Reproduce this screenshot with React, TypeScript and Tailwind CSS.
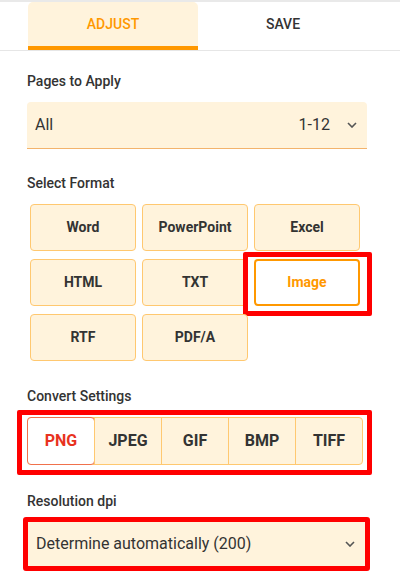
import { useState } from 'react'

const formats = ['Word', 'PowerPoint', 'Excel', 'HTML', 'TXT', 'Image', 'RTF', 'PDF/A']
const imageTypes = ['PNG', 'JPEG', 'GIF', 'BMP', 'TIFF']

function Chevron() {
  return (
    <svg width="10" height="6" viewBox="0 0 10 6" className="shrink-0">
      <path d="M1 1l4 4 4-4" fill="none" stroke="#555" strokeWidth="1.6" />
    </svg>
  )
}

export default function App() {
  const [tab, setTab] = useState('adjust')
  const [format, setFormat] = useState('Image')
  const [imgType, setImgType] = useState('PNG')

  return (
    <div className="w-[400px] h-[587px] bg-white text-[#333] overflow-hidden font-['Roboto',sans-serif]">
      <div className="h-[2px] bg-[#e9e9e9]" />
      <div className="flex pl-[28px] border-b border-[#e6e6e6]">
        {['adjust', 'save'].map((t) => (
          <button
            key={t}
            onClick={() => setTab(t)}
            className={`w-[170px] h-[48px] pt-[1px] rounded-t-[5px] text-[14px] font-medium uppercase border-b-4 ${
              tab === t ? 'bg-[#fff3dc] text-[#ff9800] border-[#ff9800]' : 'text-[#333] border-transparent'
            }`}
          >
            {t}
          </button>
        ))}
      </div>

      <div className="pl-[27px] w-[367px]">
        <div className="mt-[20px] h-[20px] leading-[20px] text-[14px] font-medium">Pages to Apply</div>
        <div className="mt-[11px] h-[47px] bg-[#fff3dc] rounded-t-[4px] border-b border-[#f3b36c] flex items-center pl-[8px] pr-[10px]">
          <span className="text-[16px] flex-1">All</span>
          <span className="text-[16px] mr-[17px]">1-12</span>
          <Chevron />
        </div>

        <div className="mt-[24px] h-[20px] leading-[20px] text-[14px] font-medium">Select Format</div>
        <div className="mt-[11px] ml-[3px] grid grid-cols-[106px_106px_106px] gap-x-[6px] gap-y-[8px]">
          {formats.map((f) => (
            <div key={f} className="relative">
              <button
                onClick={() => setFormat(f)}
                className={`w-full h-[47px] rounded-[4px] text-[14px] font-bold ${
                  format === f
                    ? 'bg-white border-2 border-[#ff9800] text-[#ff9800]'
                    : 'bg-[#fff3dc] border border-[#ffc870] text-[#333]'
                }`}
              >
                {f}
              </button>
              {f === 'Image' && (
                <span className="absolute -left-[11px] -right-[12px] -top-[7px] -bottom-[10px] border-[5px] border-[#ff0000] rounded-[2px] pointer-events-none" />
              )}
            </div>
          ))}
        </div>

        <div className="mt-[25px] h-[20px] leading-[20px] text-[14px] font-medium">Convert Settings</div>
        <div className="relative mt-[11px] w-[336px]">
          <div className="flex h-[48px] border border-[#ffc870] rounded-[4px] bg-[#fff3dc]">
            {imageTypes.map((t, i) => (
              <button
                key={t}
                onClick={() => setImgType(t)}
                className={`flex-1 text-[16px] font-bold ${
                  imgType === t
                    ? 'bg-white border border-[#f0714c] rounded-[4px] text-[#e8321e] -m-px'
                    : `text-[#333] ${i > 0 ? 'border-l border-[#ffc870]' : ''}`
                }`}
              >
                {t}
              </button>
            ))}
          </div>
          <span className="absolute -left-[10px] -right-[9px] -top-[7px] -bottom-[10px] border-[5px] border-[#ff0000] rounded-[2px] pointer-events-none" />
        </div>

        <div className="mt-[26px] h-[20px] leading-[20px] text-[14px] font-medium">Resolution dpi</div>
        <div className="mt-[6px] -ml-[4px] w-[347px] h-[54px] bg-[#fff3dc] border-[5px] border-[#ff0000] rounded-[3px] flex items-center pl-[8px] pr-[10px]">
          <span className="text-[16px] flex-1">Determine automatically (200)</span>
          <Chevron />
        </div>
      </div>
    </div>
  )
}
